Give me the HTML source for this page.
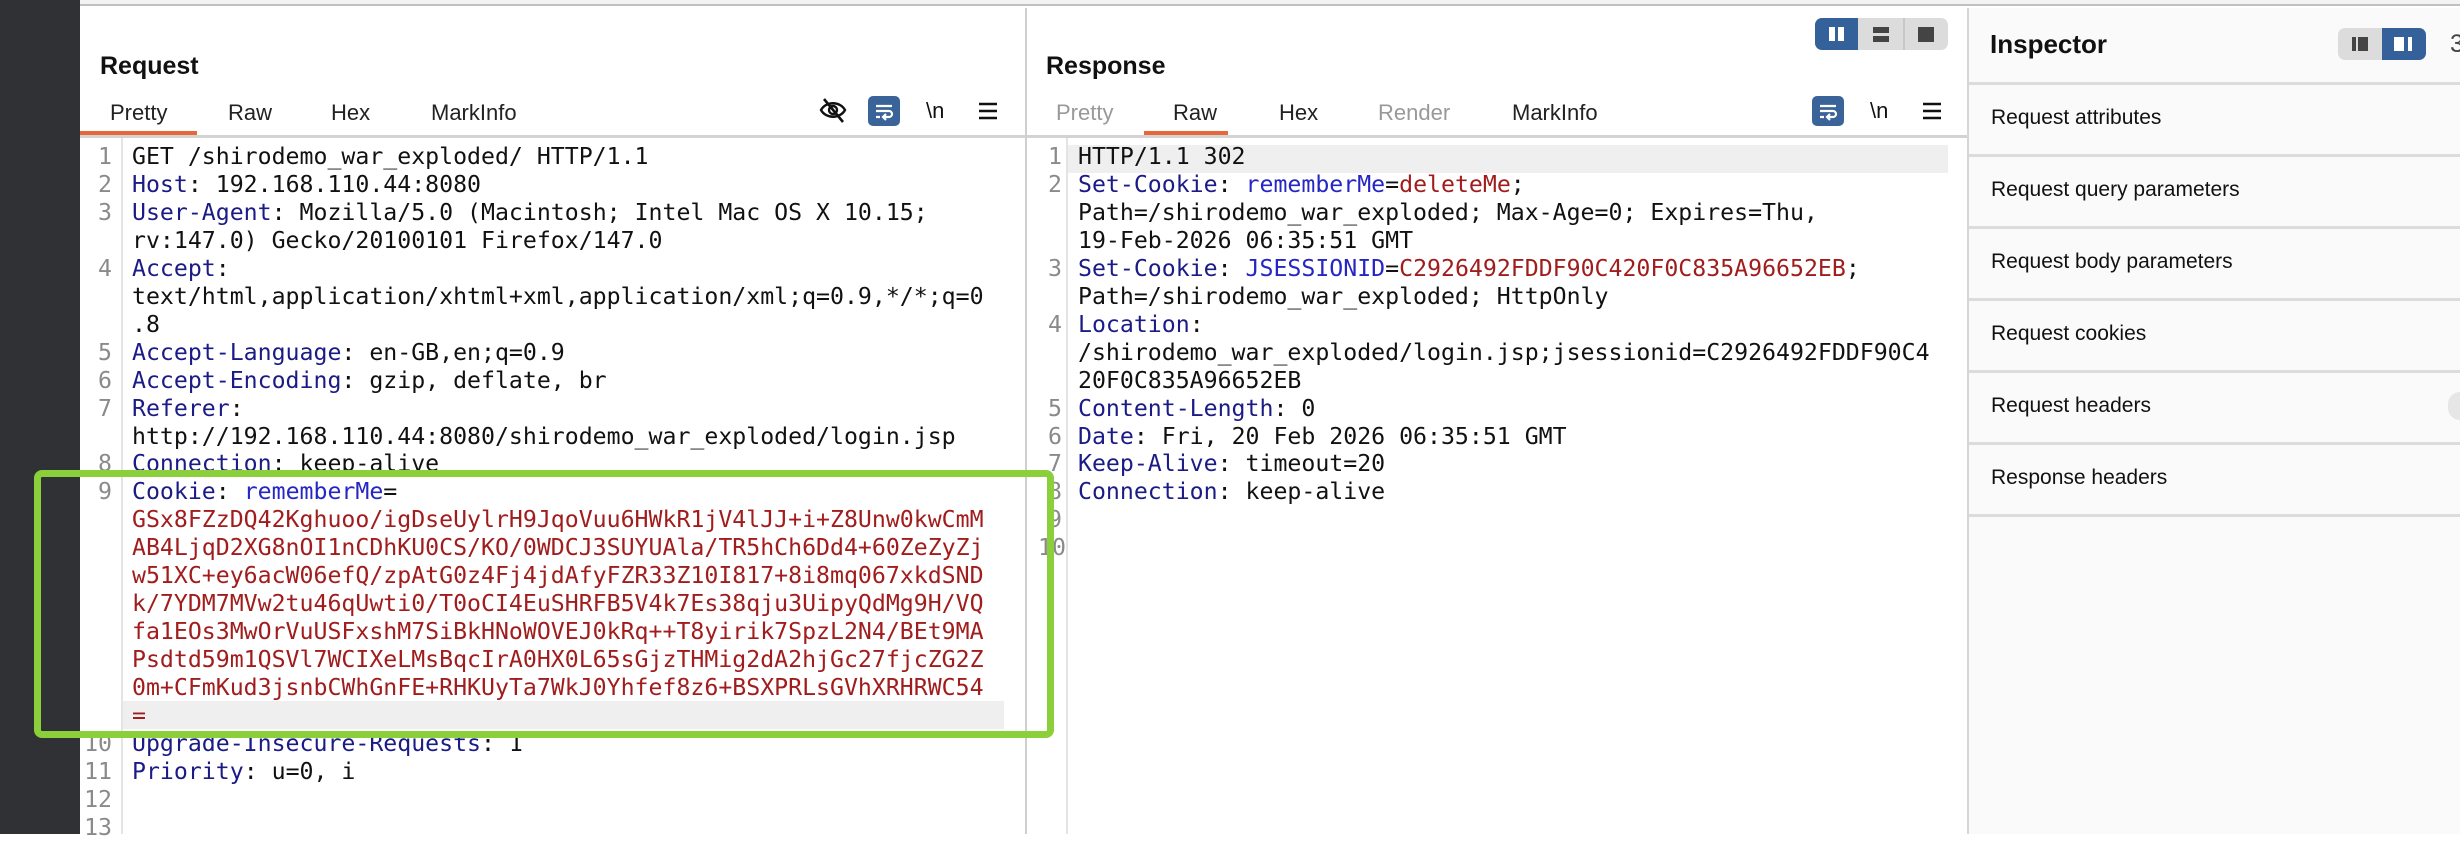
<!DOCTYPE html>
<html><head><meta charset="utf-8"><style>
*{margin:0;padding:0;box-sizing:border-box}
body{width:2460px;height:834px;overflow:hidden;background:#fff;position:relative;font-family:"Liberation Sans",sans-serif}
.a{position:absolute}
.code{font-family:"DejaVu Sans Mono","Liberation Mono",monospace;font-size:23.2px;line-height:27.95px;white-space:pre;color:#111}
.k{color:#1b1b86}.n{color:#2626c4}.v{color:#a11d1d}
.ln{font-family:"DejaVu Sans Mono",monospace;font-size:23.2px;line-height:27.95px;color:#8a8a8a;text-align:right;white-space:pre}
.tab{position:absolute;top:100px;font-size:22px;color:#222}
.title{position:absolute;font-size:25px;font-weight:bold;color:#111}
.ins{position:absolute;left:1991px;font-size:21px;color:#111}
.sep{position:absolute;left:1969px;width:491px;height:3px;background:#dcdcdc}
</style></head><body>
<div class="a" style="left:0;top:0;width:80px;height:834px;background:#303135"></div>
<div class="a" style="left:80px;top:0;width:2380px;height:6px;background:#f3f3f3;border-bottom:2px solid #c4bfbf"></div>

<!-- Request panel -->
<div class="title" style="left:100px;top:52px">Request</div>
<div class="tab" style="left:110px">Pretty</div>
<div class="tab" style="left:228px">Raw</div>
<div class="tab" style="left:331px">Hex</div>
<div class="tab" style="left:431px">MarkInfo</div>
<div class="a" style="left:80px;top:131px;width:117px;height:4px;background:#e8663a"></div>
<div class="a" style="left:80px;top:135px;width:946px;height:3px;background:#d3d3d3"></div>
<svg class="a" style="left:818px;top:96px" width="30" height="28" viewBox="0 0 30 28"><path d="M3 14 C8 5 22 5 27 14 C22 23 8 23 3 14Z" fill="none" stroke="#111" stroke-width="2.4"/><circle cx="15" cy="14" r="4" fill="none" stroke="#111" stroke-width="2.4"/><path d="M6 3 L25 26" stroke="#111" stroke-width="2.6"/></svg>
<div class="a" style="left:868px;top:96px;width:32px;height:30px;background:#3a6399;border-radius:5px"></div>
<svg class="a" style="left:868px;top:96px" width="32" height="30"><path d="M8 10H24M8 15H21a3 3 0 0 1 0 6H16M18 18l-3 3 3 3M8 21H12" fill="none" stroke="#fff" stroke-width="2.2"/></svg>
<div class="a" style="left:926px;top:98px;font-size:22px;color:#111">\n</div>
<svg class="a" style="left:978px;top:102px" width="20" height="18"><path d="M1 2H19M1 9H19M1 16H19" stroke="#111" stroke-width="2.4"/></svg>
<div class="a" style="left:121px;top:138px;width:2px;height:696px;background:#e4e4e4"></div>
<div class="a" style="left:123px;top:701px;width:881px;height:28px;background:#efefef"></div>
<div class="ln a" style="left:82px;top:143px;width:30px">1
2
3

4


5
6
7

8
9








10
11
12
13</div>
<div class="code a" style="left:132px;top:143px">GET /shirodemo_war_exploded/ HTTP/1.1
<span class="k">Host</span>: 192.168.110.44:8080
<span class="k">User-Agent</span>: Mozilla/5.0 (Macintosh; Intel Mac OS X 10.15;
rv:147.0) Gecko/20100101 Firefox/147.0
<span class="k">Accept</span>:
text/html,application/xhtml+xml,application/xml;q=0.9,*/*;q=0
.8
<span class="k">Accept-Language</span>: en-GB,en;q=0.9
<span class="k">Accept-Encoding</span>: gzip, deflate, br
<span class="k">Referer</span>:
http://192.168.110.44:8080/shirodemo_war_exploded/login.jsp
<span class="k">Connection</span>: keep-alive
<span class="k">Cookie</span>: <span class="n">rememberMe</span>=
<span class="v">GSx8FZzDQ42Kghuoo/igDseUylrH9JqoVuu6HWkR1jV4lJJ+i+Z8Unw0kwCmM
AB4LjqD2XG8nOI1nCDhKU0CS/KO/0WDCJ3SUYUAla/TR5hCh6Dd4+60ZeZyZj
w51XC+ey6acW06efQ/zpAtG0z4Fj4jdAfyFZR33Z10I817+8i8mq067xkdSND
k/7YDM7MVw2tu46qUwti0/T0oCI4EuSHRFB5V4k7Es38qju3UipyQdMg9H/VQ
fa1EOs3MwOrVuUSFxshM7SiBkHNoWOVEJ0kRq++T8yirik7SpzL2N4/BEt9MA
Psdtd59m1QSVl7WCIXeLMsBqcIrA0HX0L65sGjzTHMig2dA2hjGc27fjcZG2Z
0m+CFmKud3jsnbCWhGnFE+RHKUyTa7WkJ0Yhfef8z6+BSXPRLsGVhXRHRWC54
=</span>
<span class="k">Upgrade-Insecure-Requests</span>: 1
<span class="k">Priority</span>: u=0, i</div>

<div class="a" style="left:1025px;top:8px;width:2px;height:826px;background:#cfcfcf"></div>

<!-- Response panel -->
<div class="a" style="left:1815px;top:18px;width:133px;height:32px;background:#dcdcdc;border-radius:7px;overflow:hidden">
<div class="a" style="left:0;top:0;width:43px;height:32px;background:#35619a"></div>
<div class="a" style="left:88px;top:0;width:2px;height:32px;background:#c8c8c8"></div>
<div class="a" style="left:14px;top:9px;width:6px;height:14px;background:#fff"></div>
<div class="a" style="left:23px;top:9px;width:6px;height:14px;background:#fff"></div>
<div class="a" style="left:58px;top:9px;width:16px;height:6px;background:#444"></div>
<div class="a" style="left:58px;top:18px;width:16px;height:6px;background:#444"></div>
<div class="a" style="left:103px;top:9px;width:16px;height:15px;background:#444"></div>
</div>
<div class="title" style="left:1046px;top:52px">Response</div>
<div class="tab" style="left:1056px;color:#999">Pretty</div>
<div class="tab" style="left:1173px">Raw</div>
<div class="tab" style="left:1279px">Hex</div>
<div class="tab" style="left:1378px;color:#999">Render</div>
<div class="tab" style="left:1512px">MarkInfo</div>
<div class="a" style="left:1144px;top:131px;width:84px;height:4px;background:#e8663a"></div>
<div class="a" style="left:1027px;top:135px;width:942px;height:3px;background:#d3d3d3"></div>
<div class="a" style="left:1812px;top:96px;width:32px;height:30px;background:#3a6399;border-radius:5px"></div>
<svg class="a" style="left:1812px;top:96px" width="32" height="30"><path d="M8 10H24M8 15H21a3 3 0 0 1 0 6H16M18 18l-3 3 3 3M8 21H12" fill="none" stroke="#fff" stroke-width="2.2"/></svg>
<div class="a" style="left:1870px;top:98px;font-size:22px;color:#111">\n</div>
<svg class="a" style="left:1922px;top:102px" width="20" height="18"><path d="M1 2H19M1 9H19M1 16H19" stroke="#111" stroke-width="2.4"/></svg>
<div class="a" style="left:1066px;top:138px;width:2px;height:696px;background:#e4e4e4"></div>
<div class="a" style="left:1068px;top:145px;width:880px;height:28px;background:#efefef"></div>
<div class="ln a" style="left:1038px;top:143px;width:24px">1
2


3

4


5
6
7
8
9
10</div>
<div class="code a" style="left:1078px;top:143px">HTTP/1.1 302
<span class="k">Set-Cookie</span>: <span class="n">rememberMe</span>=<span class="v">deleteMe</span>;
Path=/shirodemo_war_exploded; Max-Age=0; Expires=Thu,
19-Feb-2026 06:35:51 GMT
<span class="k">Set-Cookie</span>: <span class="n">JSESSIONID</span>=<span class="v">C2926492FDDF90C420F0C835A96652EB</span>;
Path=/shirodemo_war_exploded; HttpOnly
<span class="k">Location</span>:
/shirodemo_war_exploded/login.jsp;jsessionid=C2926492FDDF90C4
20F0C835A96652EB
<span class="k">Content-Length</span>: 0
<span class="k">Date</span>: Fri, 20 Feb 2026 06:35:51 GMT
<span class="k">Keep-Alive</span>: timeout=20
<span class="k">Connection</span>: keep-alive</div>

<!-- Inspector -->
<div class="a" style="left:1967px;top:8px;width:2px;height:826px;background:#d6d6d6"></div>
<div class="a" style="left:1969px;top:8px;width:491px;height:826px;background:#fafafa"></div>
<div class="title" style="left:1990px;top:29px;font-size:26px">Inspector</div>
<div class="a" style="left:2338px;top:28px;width:88px;height:32px;background:#dcdcdc;border-radius:7px;overflow:hidden">
<div class="a" style="left:44px;top:0;width:44px;height:32px;background:#35619a"></div>
<div class="a" style="left:14px;top:9px;width:4px;height:14px;background:#444"></div>
<div class="a" style="left:20px;top:9px;width:10px;height:14px;background:#444"></div>
<div class="a" style="left:56px;top:9px;width:10px;height:14px;background:#fff"></div>
<div class="a" style="left:70px;top:9px;width:4px;height:14px;background:#fff"></div>
</div>
<div class="a" style="left:2450px;top:30px;font-size:25px;color:#444">3</div>
<div class="sep" style="top:82px"></div>
<div class="ins" style="top:106px">Request attributes</div>
<div class="sep" style="top:154px"></div>
<div class="ins" style="top:178px">Request query parameters</div>
<div class="sep" style="top:226px"></div>
<div class="ins" style="top:250px">Request body parameters</div>
<div class="sep" style="top:298px"></div>
<div class="ins" style="top:322px">Request cookies</div>
<div class="sep" style="top:370px"></div>
<div class="ins" style="top:394px">Request headers</div>
<div class="a" style="left:2448px;top:392px;width:24px;height:28px;border-radius:12px;background:#e6e6e6"></div>
<div class="sep" style="top:442px"></div>
<div class="ins" style="top:466px">Response headers</div>
<div class="sep" style="top:514px"></div>

<!-- Green highlight box -->
<div class="a" style="left:34px;top:470px;width:1020px;height:268px;border:7px solid #8bcf3b;border-radius:8px"></div>
</body></html>
